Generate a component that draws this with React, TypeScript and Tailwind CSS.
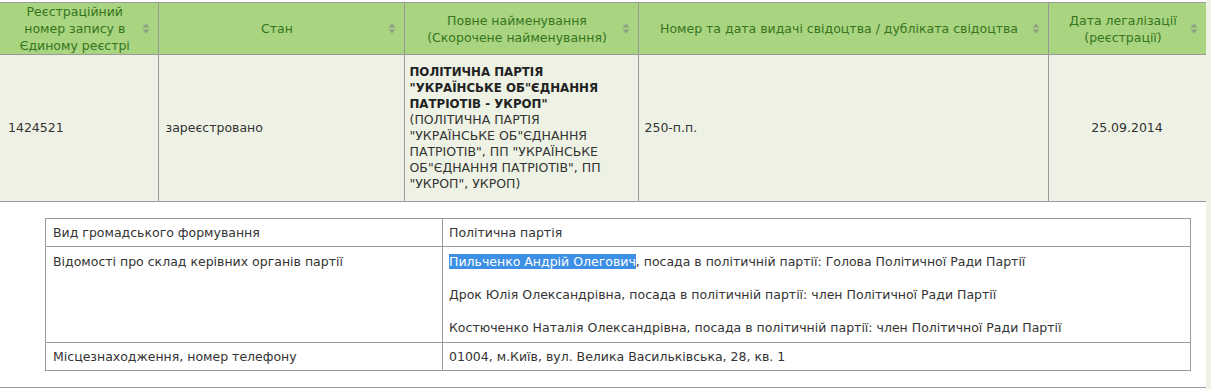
import React from "react";

function SortIcon() {
  return (
    <svg width="8" height="11" viewBox="0 0 8 11" className="shrink-0">
      <path d="M4 0.5 L7.5 4.5 L0.5 4.5 Z" fill="#8e9e86" />
      <path d="M4 10.5 L7.5 6.5 L0.5 6.5 Z" fill="#8e9e86" />
    </svg>
  );
}

function Th({ children }: { children: React.ReactNode }) {
  return (
    <th className="h-[52px] border-r border-[#9a9a9a] p-0 align-middle font-normal">
      <div className="flex items-center pl-2 pr-[8px]">
        <div className="flex-1 text-center leading-[17px] text-[#367420]">{children}</div>
        <SortIcon />
      </div>
    </th>
  );
}

const members = [
  { name: "Пильченко Андрій Олегович", role: "Голова Політичної Ради Партії", selected: true },
  { name: "Дрок Юлія Олександрівна", role: "член Політичної Ради Партії" },
  { name: "Костюченко Наталія Олександрівна", role: "член Політичної Ради Партії" },
];

export default function App() {
  return (
    <div
      className="flex h-[389px] w-full bg-white text-[12.5px] text-[#333]"
      style={{ fontFamily: '"DejaVu Sans", Verdana, sans-serif' }}
    >
      <div className="w-[1206px] shrink-0 pt-[2px]">
        <table className="w-[1206px] table-fixed border-collapse">
          <colgroup>
            <col className="w-[158px]" />
            <col className="w-[246px]" />
            <col className="w-[234px]" />
            <col className="w-[410px]" />
            <col className="w-[158px]" />
          </colgroup>
          <thead>
            <tr className="border-t border-b border-[#9a9a9a] bg-[#a9d480]">
              <Th>
                Реєстраційний
                <br />
                номер запису в
                <br />
                Єдиному реєстрі
              </Th>
              <Th>Стан</Th>
              <Th>
                Повне найменування
                <br />
                (Скорочене найменування)
              </Th>
              <Th>Номер та дата видачі свідоцтва / дубліката свідоцтва</Th>
              <Th>
                Дата легалізації
                <br />
                (реєстрації)
              </Th>
            </tr>
          </thead>
          <tbody>
            <tr className="h-[147px] border-b border-[#9a9a9a] bg-[#eef2e4] leading-[16px]">
              <td className="border-r border-[#9a9a9a] pl-[8px] align-middle">1424521</td>
              <td className="border-r border-[#9a9a9a] pl-[7px] align-middle">зареєстровано</td>
              <td className="border-r border-[#9a9a9a] pl-[5px] align-middle">
                <b className="text-[11.8px] font-bold text-[#222]">
                  ПОЛІТИЧНА ПАРТІЯ
                  <br />
                  "УКРАЇНСЬКЕ ОБ"ЄДНАННЯ
                  <br />
                  ПАТРІОТІВ - УКРОП"
                </b>
                <br />
                (ПОЛІТИЧНА ПАРТІЯ
                <br />
                "УКРАЇНСЬКЕ ОБ"ЄДНАННЯ
                <br />
                ПАТРІОТІВ", ПП "УКРАЇНСЬКЕ
                <br />
                ОБ"ЄДНАННЯ ПАТРІОТІВ", ПП
                <br />
                "УКРОП", УКРОП)
              </td>
              <td className="border-r border-[#9a9a9a] pl-[6px] align-middle">250-п.п.</td>
              <td className="border-r border-[#9a9a9a] text-center align-middle">25.09.2014</td>
            </tr>
            <tr className="border-b border-[#9a9a9a]">
              <td colSpan={5} className="border-r border-[#b8b8b8] pt-[16px] pb-[16px] pl-[45px] pr-[15px]">
                <table className="w-full table-fixed border-collapse border border-[#9a9a9a] leading-[16px]">
                  <colgroup>
                    <col className="w-[397px]" />
                    <col />
                  </colgroup>
                  <tbody>
                    <tr className="h-[28px] border-b border-[#9a9a9a]">
                      <td className="border-r border-[#9a9a9a] pl-[7px] align-middle">Вид громадського формування</td>
                      <td className="pl-[6px] align-middle">Політична партія</td>
                    </tr>
                    <tr className="h-[96px] border-b border-[#9a9a9a]">
                      <td className="border-r border-[#9a9a9a] pl-[7px] pt-[7px] align-top">
                        Відомості про склад керівних органів партії
                      </td>
                      <td className="pl-[6px] pt-[7px] align-top">
                        <div className="flex flex-col gap-[17px]">
                          {members.map((m) => (
                            <p key={m.name}>
                              {m.selected ? (
                                <span className="bg-[#3d8fe6] text-white">{m.name}</span>
                              ) : (
                                m.name
                              )}
                              , посада в політичній партії: {m.role}
                            </p>
                          ))}
                        </div>
                      </td>
                    </tr>
                    <tr className="h-[28px]">
                      <td className="border-r border-[#9a9a9a] pl-[7px] align-middle">Місцезнаходження, номер телефону</td>
                      <td className="pl-[6px] align-middle">01004, м.Київ, вул. Велика Васильківська, 28, кв. 1</td>
                    </tr>
                  </tbody>
                </table>
              </td>
            </tr>
          </tbody>
        </table>
      </div>
      <div className="flex-1 bg-[#eef2e4]" />
    </div>
  );
}
